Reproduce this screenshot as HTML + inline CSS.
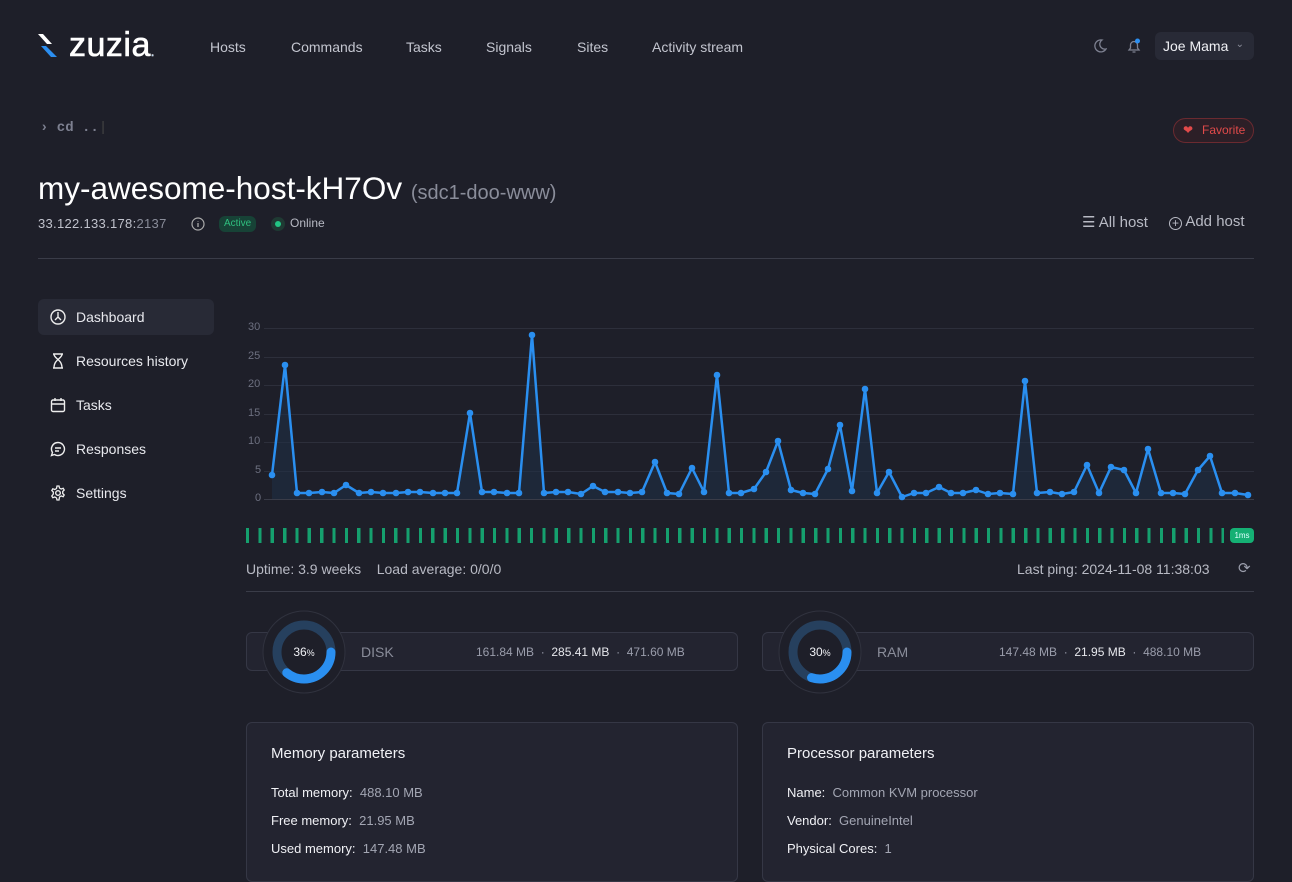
<!DOCTYPE html>
<html><head><meta charset="utf-8"><style>
*{box-sizing:border-box;margin:0;padding:0}
body{width:1292px;height:862px;overflow:hidden;background:#1e1f29;font-family:"Liberation Sans",sans-serif;color:#e6e7ec;position:relative}
.a{position:absolute;white-space:nowrap}
.nav{font-size:14px;color:#c3c5cf;top:39px}
.side{left:38px;width:176px;height:36px;border-radius:6px;font-size:14px;color:#e8e9ee;padding-left:38px;line-height:36px}
.side svg{position:absolute;left:12px;top:10px}
.yl{font-size:11px;color:#6d7080;left:248px}
.card{border:1px solid #353745;background:#232430;border-radius:6px}
.lbl{font-size:13px;color:#f0f1f5}
.val{color:#a3a6b3}
</style></head><body>
<!-- logo -->
<svg class="a" style="left:38px;top:33px" width="26" height="26" viewBox="0 0 26 26"><path d="M0 1h5l9 10h-5z" fill="#fff"/><path d="M3 13h5l11 11h-6z" fill="#2b8ef0"/></svg>
<div class="a" style="left:69px;top:26px;font-size:34px;color:#fff;letter-spacing:0.5px;-webkit-text-stroke:0.6px #fff">zuzia<span style="color:#2b8ef0;font-size:12px">.</span></div>
<div class="a nav" style="left:210px">Hosts</div>
<div class="a nav" style="left:291px">Commands</div>
<div class="a nav" style="left:406px">Tasks</div>
<div class="a nav" style="left:486px">Signals</div>
<div class="a nav" style="left:577px">Sites</div>
<div class="a nav" style="left:652px">Activity stream</div>
<svg class="a" style="left:1093px;top:39px" width="14" height="14" viewBox="0 0 14 14"><path d="M9 1a6 6 0 1 0 4 9A5 5 0 0 1 9 1z" fill="none" stroke="#7d8090" stroke-width="1.3"/></svg>
<svg class="a" style="left:1126px;top:38px" width="16" height="16" viewBox="0 0 16 16"><path d="M3 12h10l-1.5-2V7a3.5 3.5 0 0 0-7 0v3z M6.5 14h3" fill="none" stroke="#7d8090" stroke-width="1.3"/><circle cx="11.5" cy="3" r="2.5" fill="#2b8ef0"/></svg>
<div class="a" style="left:1155px;top:32px;width:99px;height:28px;border-radius:6px;background:#282a36;font-size:14px;color:#f0f1f5;line-height:28px;padding-left:8px">Joe Mama<span style="position:absolute;right:10px;top:-1px;color:#8a8d9a;font-size:10px">&#8964;</span></div>

<div class="a" style="left:40px;top:120px;font-family:'Liberation Mono',monospace;font-size:14px;font-weight:bold;color:#7d8090">›&nbsp;cd ..<span style="color:#444;font-weight:normal">|</span></div>
<div class="a" style="left:1173px;top:118px;width:81px;height:25px;border-radius:13px;border:1px solid #6b2a30;background:#2c1f27;color:#e04a4a;font-size:12px;line-height:23px;padding-left:28px"><span style="position:absolute;left:9px;top:0;font-size:12px">&#10084;</span>Favorite</div>

<div class="a" style="left:38px;top:170px;font-size:31.5px;color:#fff">my-awesome-host-kH7Ov <span style="font-size:20px;color:#8a8d9a">(sdc1-doo-www)</span></div>
<div class="a" style="left:38px;top:216px;font-size:13px;color:#c0c2cc;letter-spacing:0.3px">33.122.133.178:<span style="color:#8a8d9a">2137</span></div>
<svg class="a" style="left:191px;top:217px" width="14" height="14"><circle cx="7" cy="7" r="6" fill="none" stroke="#aaa" stroke-width="1.2"/><path d="M7 6v4M7 4v0.5" stroke="#aaa" stroke-width="1.3"/></svg>
<div class="a" style="left:219px;top:216px;height:16px;border-radius:6px;background:#174236;color:#2fbf7f;font-size:10px;line-height:16px;padding:0 5px">Active</div>
<div class="a" style="left:271px;top:217px;width:14px;height:14px;border-radius:7px;background:#1f3a33"><div style="margin:4px;width:6px;height:6px;border-radius:3px;background:#22c584"></div></div>
<div class="a" style="left:290px;top:216px;font-size:12px;color:#b8bac4">Online</div>
<div class="a" style="left:1082px;top:213px;font-size:15px;color:#b8bac4">☰ All host</div>
<div class="a" style="left:1169px;top:213px;font-size:15px;color:#b8bac4"><span style="display:inline-block;width:13px;height:13px;border:1.3px solid #b8bac4;border-radius:7px;font-size:12px;line-height:10px;text-align:center;vertical-align:-1px">+</span> Add host</div>
<div class="a" style="left:38px;top:258px;width:1216px;height:1px;background:#3a3c48"></div>

<!-- sidebar -->
<div class="a side" style="top:299px;background:#282a36"><svg width="16" height="16" viewBox="0 0 16 16"><circle cx="8" cy="8" r="7" fill="none" stroke="#eee" stroke-width="1.4"/><path d="M8 3v5l-3 3M8 8l3 3" stroke="#eee" stroke-width="1.4" fill="none"/></svg>Dashboard</div>
<div class="a side" style="top:343px"><svg width="16" height="16" viewBox="0 0 16 16"><path d="M3 1h10M3 15h10M4 1c0 5 8 5 8 14M12 1c0 5-8 5-8 14" stroke="#eee" stroke-width="1.4" fill="none"/></svg>Resources history</div>
<div class="a side" style="top:387px"><svg width="16" height="16" viewBox="0 0 16 16"><rect x="1.5" y="3" width="13" height="11.5" rx="1.5" fill="none" stroke="#eee" stroke-width="1.4"/><path d="M1.5 7h13M5 1v3M11 1v3" stroke="#eee" stroke-width="1.4"/></svg>Tasks</div>
<div class="a side" style="top:431px"><svg width="16" height="16" viewBox="0 0 16 16"><path d="M8 1.5a6.5 6.5 0 1 1-3.5 12L1.5 14.5l1-3A6.5 6.5 0 0 1 8 1.5zM5 7h6M5 10h4" stroke="#eee" stroke-width="1.4" fill="none"/></svg>Responses</div>
<div class="a side" style="top:475px"><svg width="16" height="16" viewBox="0 0 16 16"><circle cx="8" cy="8" r="2.3" fill="none" stroke="#eee" stroke-width="1.4"/><path d="M7 1h2l.5 2 1.7 1 2-.7 1 1.7-1.5 1.5v2l1.5 1.5-1 1.7-2-.7-1.7 1L9 15H7l-.5-2-1.7-1-2 .7-1-1.7L3.3 9V7L1.8 5.5l1-1.7 2 .7 1.7-1z" stroke="#eee" stroke-width="1.3" fill="none"/></svg>Settings</div>

<!-- chart -->
<div class="a yl" style="top:321px">30</div><div class="a yl" style="top:350px">25</div><div class="a yl" style="top:378px">20</div><div class="a yl" style="top:407px">15</div><div class="a yl" style="top:435px">10</div><div class="a yl" style="top:464px;left:255px">5</div><div class="a yl" style="top:492px;left:255px">0</div>
<svg class="a" style="left:0;top:0" width="1292" height="560">
<g stroke="#2d2f3b" stroke-width="1"><path d="M264 328.5H1254M264 357.5H1254M264 385.5H1254M264 414.5H1254M264 442.5H1254M264 471.5H1254"/></g>
<path d="M264 499.5H1254" stroke="#3a3c48"/>
<polygon fill="#1f3047" opacity="0.55" points="272,499 272,475 285,365 297,493 309,493 322,492 334,493 346,485 359,493 371,492 383,493 396,493 408,492 420,492 433,493 445,493 457,493 470,413 482,492 494,492 507,493 519,493 532,335 544,493 556,492 568,492 581,494 593,486 605,492 618,492 630,493 642,492 655,462 667,493 679,494 692,468 704,492 717,375 729,493 741,493 754,489 766,472 778,441 791,490 803,493 815,494 828,469 840,425 852,491 865,389 877,493 889,472 902,497 914,493 926,493 939,487 951,493 963,493 976,490 988,494 1000,493 1013,494 1025,381 1037,493 1050,492 1062,494 1074,492 1087,465 1099,493 1111,467 1124,470 1136,493 1148,449 1161,493 1173,493 1185,494 1198,470 1210,456 1222,493 1235,493 1248,495 1248,499"/>
<polyline fill="none" stroke="#2a8ff0" stroke-width="2.5" stroke-linejoin="round" points="272,475 285,365 297,493 309,493 322,492 334,493 346,485 359,493 371,492 383,493 396,493 408,492 420,492 433,493 445,493 457,493 470,413 482,492 494,492 507,493 519,493 532,335 544,493 556,492 568,492 581,494 593,486 605,492 618,492 630,493 642,492 655,462 667,493 679,494 692,468 704,492 717,375 729,493 741,493 754,489 766,472 778,441 791,490 803,493 815,494 828,469 840,425 852,491 865,389 877,493 889,472 902,497 914,493 926,493 939,487 951,493 963,493 976,490 988,494 1000,493 1013,494 1025,381 1037,493 1050,492 1062,494 1074,492 1087,465 1099,493 1111,467 1124,470 1136,493 1148,449 1161,493 1173,493 1185,494 1198,470 1210,456 1222,493 1235,493 1248,495"/>
<g fill="#2a8ff0"><circle cx="272" cy="475" r="3.3"/><circle cx="285" cy="365" r="3.3"/><circle cx="470" cy="413" r="3.3"/><circle cx="532" cy="335" r="3.3"/><circle cx="655" cy="462" r="3.3"/><circle cx="692" cy="468" r="3.3"/><circle cx="717" cy="375" r="3.3"/><circle cx="778" cy="441" r="3.3"/><circle cx="766" cy="472" r="3.3"/><circle cx="828" cy="469" r="3.3"/><circle cx="840" cy="425" r="3.3"/><circle cx="865" cy="389" r="3.3"/><circle cx="889" cy="472" r="3.3"/><circle cx="1025" cy="381" r="3.3"/><circle cx="1087" cy="465" r="3.3"/><circle cx="1111" cy="467" r="3.3"/><circle cx="1124" cy="470" r="3.3"/><circle cx="1148" cy="449" r="3.3"/><circle cx="1198" cy="470" r="3.3"/><circle cx="1210" cy="456" r="3.3"/><circle cx="346" cy="485" r="3.3"/><circle cx="593" cy="486" r="3.3"/><circle cx="939" cy="487" r="3.3"/></g>
<g fill="#2a8ff0"><circle cx="297" cy="493" r="3.3"/><circle cx="309" cy="493" r="3.3"/><circle cx="322" cy="492" r="3.3"/><circle cx="334" cy="493" r="3.3"/><circle cx="359" cy="493" r="3.3"/><circle cx="371" cy="492" r="3.3"/><circle cx="383" cy="493" r="3.3"/><circle cx="396" cy="493" r="3.3"/><circle cx="408" cy="492" r="3.3"/><circle cx="420" cy="492" r="3.3"/><circle cx="433" cy="493" r="3.3"/><circle cx="445" cy="493" r="3.3"/><circle cx="457" cy="493" r="3.3"/><circle cx="482" cy="492" r="3.3"/><circle cx="494" cy="492" r="3.3"/><circle cx="507" cy="493" r="3.3"/><circle cx="519" cy="493" r="3.3"/><circle cx="544" cy="493" r="3.3"/><circle cx="556" cy="492" r="3.3"/><circle cx="568" cy="492" r="3.3"/><circle cx="581" cy="494" r="3.3"/><circle cx="605" cy="492" r="3.3"/><circle cx="618" cy="492" r="3.3"/><circle cx="630" cy="493" r="3.3"/><circle cx="642" cy="492" r="3.3"/><circle cx="667" cy="493" r="3.3"/><circle cx="679" cy="494" r="3.3"/><circle cx="704" cy="492" r="3.3"/><circle cx="729" cy="493" r="3.3"/><circle cx="741" cy="493" r="3.3"/><circle cx="754" cy="489" r="3.3"/><circle cx="791" cy="490" r="3.3"/><circle cx="803" cy="493" r="3.3"/><circle cx="815" cy="494" r="3.3"/><circle cx="852" cy="491" r="3.3"/><circle cx="877" cy="493" r="3.3"/><circle cx="902" cy="497" r="3.3"/><circle cx="914" cy="493" r="3.3"/><circle cx="926" cy="493" r="3.3"/><circle cx="951" cy="493" r="3.3"/><circle cx="963" cy="493" r="3.3"/><circle cx="976" cy="490" r="3.3"/><circle cx="988" cy="494" r="3.3"/><circle cx="1000" cy="493" r="3.3"/><circle cx="1013" cy="494" r="3.3"/><circle cx="1037" cy="493" r="3.3"/><circle cx="1050" cy="492" r="3.3"/><circle cx="1062" cy="494" r="3.3"/><circle cx="1074" cy="492" r="3.3"/><circle cx="1099" cy="493" r="3.3"/><circle cx="1136" cy="493" r="3.3"/><circle cx="1161" cy="493" r="3.3"/><circle cx="1173" cy="493" r="3.3"/><circle cx="1185" cy="494" r="3.3"/><circle cx="1222" cy="493" r="3.3"/><circle cx="1235" cy="493" r="3.3"/><circle cx="1248" cy="495" r="3.3"/></g>
</svg>
<div class="a" style="left:246px;top:528px;width:978px;height:15px;background:repeating-linear-gradient(90deg,#15a06e 0 3.2px,transparent 3.2px 12.35px)"></div>
<div class="a" style="left:1230px;top:528px;width:24px;height:15px;border-radius:4px;background:#15b074;color:#dff;font-size:8px;line-height:15px;text-align:center">1ms</div>
<div class="a" style="left:246px;top:561px;font-size:14px;color:#b8bac4">Uptime: 3.9 weeks&nbsp;&nbsp;&nbsp;&nbsp;Load average: 0/0/0</div>
<div class="a" style="left:1017px;top:561px;font-size:14px;color:#b8bac4">Last ping: 2024-11-08 11:38:03</div>
<div class="a" style="left:1238px;top:559px;font-size:15px;color:#9a9dab">⟳</div>
<div class="a" style="left:246px;top:591px;width:1008px;height:1px;background:#3a3c48"></div>

<!-- gauges -->
<div class="a card" style="left:246px;top:632px;width:492px;height:39px"></div>
<div class="a card" style="left:762px;top:632px;width:492px;height:39px"></div>
<svg class="a" style="left:262px;top:610px" width="84" height="84"><circle cx="42" cy="42" r="41" fill="#1e1f29" stroke="#30323e"/><circle cx="42" cy="42" r="27" fill="none" stroke="#26405e" stroke-width="9"/><circle cx="42" cy="42" r="27" fill="none" stroke="#2a8ff0" stroke-width="9" stroke-linecap="round" stroke-dasharray="61 200"/><text x="42" y="46" text-anchor="middle" fill="#f0f1f5" font-family="Liberation Sans" font-size="12">36<tspan font-size="9">%</tspan></text></svg>
<svg class="a" style="left:778px;top:610px" width="84" height="84"><circle cx="42" cy="42" r="41" fill="#1e1f29" stroke="#30323e"/><circle cx="42" cy="42" r="27" fill="none" stroke="#26405e" stroke-width="9"/><circle cx="42" cy="42" r="27" fill="none" stroke="#2a8ff0" stroke-width="9" stroke-linecap="round" stroke-dasharray="51 200"/><text x="42" y="46" text-anchor="middle" fill="#f0f1f5" font-family="Liberation Sans" font-size="12">30<tspan font-size="9">%</tspan></text></svg>
<div class="a" style="left:361px;top:644px;font-size:14px;color:#8a8d9a">DISK</div>
<div class="a" style="left:476px;top:645px;font-size:12px;color:#9a9dab">161.84 MB &nbsp;·&nbsp; <span style="color:#e6e7ec">285.41 MB</span> &nbsp;·&nbsp; 471.60 MB</div>
<div class="a" style="left:877px;top:644px;font-size:14px;color:#8a8d9a">RAM</div>
<div class="a" style="left:999px;top:645px;font-size:12px;color:#9a9dab">147.48 MB &nbsp;·&nbsp; <span style="color:#e6e7ec">21.95 MB</span> &nbsp;·&nbsp; 488.10 MB</div>

<!-- param cards -->
<div class="a card" style="left:246px;top:722px;width:492px;height:160px"></div>
<div class="a card" style="left:762px;top:722px;width:492px;height:160px"></div>
<div class="a" style="left:271px;top:745px;font-size:15px;color:#f0f1f5">Memory parameters</div>
<div class="a lbl" style="left:271px;top:785px">Total memory:&nbsp; <span class="val">488.10 MB</span></div>
<div class="a lbl" style="left:271px;top:813px">Free memory:&nbsp; <span class="val">21.95 MB</span></div>
<div class="a lbl" style="left:271px;top:841px">Used memory:&nbsp; <span class="val">147.48 MB</span></div>
<div class="a" style="left:787px;top:745px;font-size:15px;color:#f0f1f5">Processor parameters</div>
<div class="a lbl" style="left:787px;top:785px">Name:&nbsp; <span class="val">Common KVM processor</span></div>
<div class="a lbl" style="left:787px;top:813px">Vendor:&nbsp; <span class="val">GenuineIntel</span></div>
<div class="a lbl" style="left:787px;top:841px">Physical Cores:&nbsp; <span class="val">1</span></div>
</body></html>
